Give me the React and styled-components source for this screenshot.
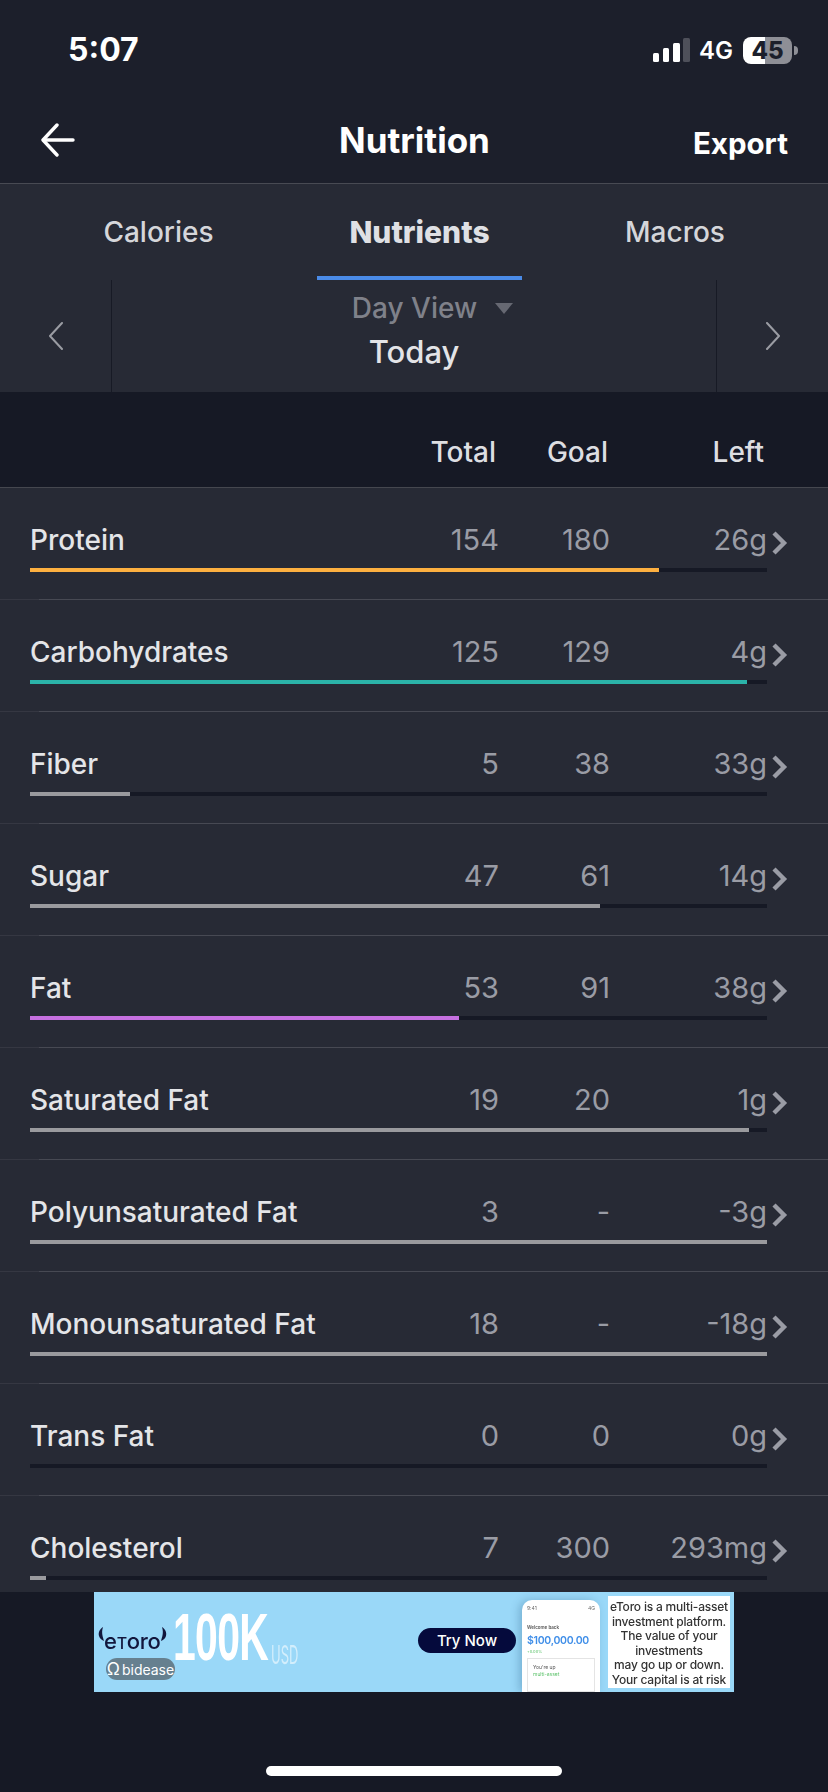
import React from "react";
import styled, { createGlobalStyle } from "styled-components";

const GlobalStyle = createGlobalStyle`
  html, body {
    margin: 0;
    padding: 0;
    background: #161925;
  }
  * {
    box-sizing: border-box;
  }
`;

const Page = styled.div`
  width: 828px;
  height: 1792px;
  display: flex;
  flex-direction: column;
  overflow: hidden;
  background: #161925;
  font-family: Inter, "Liberation Sans", sans-serif;
`;

const StatusBar = styled.div`
  height: 98px;
  flex: none;
  background: #1c1f2b;
  display: flex;
  justify-content: space-between;
  align-items: flex-start;
  padding: 30px 30px 0 68px;
`;

const Time = styled.div`
  font-size: 32px;
  line-height: 40px;
  font-weight: 700;
  color: #fff;
`;

const StatusRight = styled.div`
  display: flex;
  align-items: center;
  height: 40px;
`;

const NetLabel = styled.span`
  font-size: 24px;
  font-weight: 600;
  color: #fff;
  margin: 0 10px 0 9px;
`;

const Battery = styled.div`
  width: 49px;
  height: 27px;
  border-radius: 8px;
  background: linear-gradient(to right, #fff 45%, #8e8f96 45%);
  color: #1c1f2b;
  font-size: 24px;
  font-weight: 800;
  line-height: 27px;
  text-align: center;
`;

const BatteryTip = styled.div`
  width: 4px;
  height: 9px;
  margin-left: 2px;
  border-radius: 0 4px 4px 0;
  background: #8e8f96;
`;

const NavBar = styled.div`
  height: 86px;
  flex: none;
  background: #1c1f2b;
  border-bottom: 1px solid #484a53;
  display: grid;
  grid-template-columns: 1fr auto 1fr;
  align-items: center;
  padding: 0 40px 2px 41px;
`;

const NavTitle = styled.div`
  font-size: 35px;
  font-weight: 700;
  color: #fff;
`;

const ExportBtn = styled.div`
  justify-self: end;
  font-size: 29.5px;
  font-weight: 700;
  color: #fff;
  margin-top: 6px;
`;

const Tabs = styled.div`
  height: 96px;
  flex: none;
  background: #272a35;
  display: grid;
  grid-template-columns: 317px 205px 1fr;
`;

const Tab = styled.div`
  display: flex;
  align-items: center;
  justify-content: center;
  padding-top: 3px;
  font-size: ${(p) => (p.$active ? "30px" : "28px")};
  font-weight: ${(p) => (p.$active ? 800 : 500)};
  color: ${(p) => (p.$active ? "#dfe0e4" : "#d5d6da")};
  border-bottom: 4px solid ${(p) => (p.$active ? "#4a8be8" : "transparent")};
`;

const DaySelector = styled.div`
  height: 112px;
  flex: none;
  background: #272a35;
  display: grid;
  grid-template-columns: 112px 1fr 112px;
`;

const DayArrow = styled.div`
  display: flex;
  align-items: center;
  justify-content: center;
  border-right: ${(p) => (p.$side === "left" ? "1px solid #171a25" : "none")};
  border-left: ${(p) => (p.$side === "right" ? "1px solid #171a25" : "none")};
`;

const DayCenter = styled.div`
  display: flex;
  flex-direction: column;
  align-items: center;
  padding-top: 11px;
`;

const DayMode = styled.div`
  display: flex;
  align-items: center;
  font-size: 28px;
  line-height: 34px;
  font-weight: 500;
  color: #7f818a;
`;

const Caret = styled.span`
  width: 0;
  height: 0;
  margin: 0 -37px 0 18px;
  border-left: 9.5px solid transparent;
  border-right: 9.5px solid transparent;
  border-top: 11px solid #666872;
`;

const DayName = styled.div`
  margin-top: 9px;
  font-size: 31px;
  line-height: 36px;
  font-weight: 500;
  color: #e3e4e7;
`;

const TableHead = styled.div`
  height: 96px;
  flex: none;
  background: #161925;
  border-bottom: 1px solid #45474f;
  display: grid;
  grid-template-columns: 1fr 100px 112px 156px;
  align-items: center;
  padding: 24px 64px 0 30px;
`;

const HeadCell = styled.div`
  text-align: right;
  font-size: 28px;
  font-weight: 500;
  color: #dddee2;
`;

const RowList = styled.div`
  flex: 1;
  min-height: 0;
  overflow: hidden;
  background: #272a35;
`;

const Row = styled.div`
  height: 112px;
  padding: 34px 40px 0 30px;
  border-bottom: 1px solid #45474f;
  border-image: linear-gradient(to right, #353742 40px, #474953 40px) 1;
`;

const RowTop = styled.div`
  display: grid;
  grid-template-columns: 1fr 101px 111px 157px 21px;
  align-items: center;
  height: 34px;
`;

const Name = styled.div`
  font-size: 28px;
  font-weight: 500;
  color: #e4e5e8;
  white-space: nowrap;
`;

const Num = styled.div`
  text-align: right;
  font-size: 29px;
  font-weight: 400;
  color: #9a9ca5;
`;

const RowChevron = styled.svg`
  justify-self: end;
  margin-top: 7px;
`;

const Track = styled.div`
  height: 4px;
  margin: 12px 21px 0 0;
  background: #161925;
`;

const Fill = styled.div`
  height: 100%;
  background: ${(p) => p.$color};
`;

const Footer = styled.div`
  height: 200px;
  flex: none;
  background: #161925;
  display: flex;
  flex-direction: column;
  align-items: center;
`;

const AdBanner = styled.div`
  position: relative;
  width: 640px;
  height: 100px;
  flex: none;
  background: #9ad8f8;
  display: flex;
  overflow: hidden;
`;

const LogoBox = styled.div`
  width: 79px;
  padding: 36px 0 0 4px;
  flex: none;
  display: flex;
  align-items: flex-start;
`;

const LogoText = styled.div`
  font-size: 22px;
  line-height: 26px;
  font-weight: 500;
  color: #12163c;
  letter-spacing: -0.3px;
  filter: blur(0.4px);
`;

const SmallT = styled.span`
  font-size: 16px;
`;

const Horn = styled.svg`
  flex: none;
  margin-top: -1px;
  filter: blur(0.3px);
`;

const BigAmount = styled.div`
  font-family: "Liberation Sans", sans-serif;
  font-size: 67px;
  line-height: 100px;
  font-weight: 700;
  color: #fff;
  width: 92px;
  margin-top: -5px;
  transform: scaleX(0.61);
  transform-origin: left center;
  white-space: nowrap;
  letter-spacing: -1px;
  filter: blur(0.5px);
`;

const AmountUnit = styled.div`
  font-size: 26px;
  font-weight: 400;
  color: #d3eefc;
  width: 24px;
  margin: 47px 0 0 6px;
  transform: scaleX(0.5);
  transform-origin: left center;
  white-space: nowrap;
  filter: blur(0.5px);
`;

const TryNow = styled.div`
  width: 98px;
  height: 25px;
  margin: 36px 0 0 auto;
  border-radius: 13px;
  background: #050a3c;
  color: #fff;
  font-size: 15px;
  line-height: 25px;
  font-weight: 500;
  text-align: center;
  flex: none;
`;

const BideaseBadge = styled.div`
  position: absolute;
  left: 12px;
  top: 66px;
  width: 69px;
  height: 22px;
  border-radius: 11px;
  background: #66808f;
  color: #fff;
  font-size: 14px;
  line-height: 22px;
  font-weight: 400;
  text-align: center;
  white-space: nowrap;
`;

const BadgeMark = styled.span`
  font-size: 17px;
  margin-right: 2px;
`;

const PhoneMock = styled.div`
  width: 78px;
  height: 92px;
  margin: 8px 0 0 6px;
  padding: 4px 5px 0;
  flex: none;
  border-radius: 10px 10px 0 0;
  background: #fff;
  box-shadow: -3px 0 8px rgba(40, 90, 130, 0.3);
  display: flex;
  flex-direction: column;
  filter: blur(0.4px);
`;

const PhoneTop = styled.div`
  display: flex;
  justify-content: space-between;
  font-size: 5px;
  line-height: 8px;
  color: #666;
`;

const PhoneSmall = styled.div`
  margin-top: 13px;
  font-size: 4.5px;
  line-height: 6px;
  font-weight: 600;
  color: #555;
`;

const PhoneMoney = styled.div`
  margin-top: 3px;
  font-size: 10.5px;
  line-height: 13px;
  font-weight: 600;
  color: #3f8ee8;
  letter-spacing: -0.3px;
  white-space: nowrap;
`;

const PhoneGain = styled.div`
  margin-top: 2px;
  font-size: 4px;
  line-height: 6px;
  color: #5cc26a;
`;

const PhoneCard = styled.div`
  flex: 1;
  margin-top: 3px;
  padding: 5px 5px 0;
  border: 1px solid #e4e4e4;
  font-size: 5px;
  line-height: 7px;
  color: #555;
`;

const PhoneCardAccent = styled.div`
  color: #5cc26a;
`;

const Disclaimer = styled.div`
  width: 122px;
  height: 92px;
  margin: 4px 4px 0 8px;
  padding: 4px 0 0;
  flex: none;
  background: #fff;
  color: #333;
  font-size: 12px;
  line-height: 14.5px;
  font-weight: 500;
  text-align: center;
  white-space: nowrap;
  letter-spacing: -0.2px;
  filter: blur(0.6px);
`;

const HomeBar = styled.div`
  width: 296px;
  height: 10px;
  margin-top: 74px;
  flex: none;
  border-radius: 5px;
  background: #fff;
`;

const rows = [
  { name: "Protein", total: "154", goal: "180", left: "26g", pct: 85.4, color: "#fdb040" },
  { name: "Carbohydrates", total: "125", goal: "129", left: "4g", pct: 97.3, color: "#2bb3a9" },
  { name: "Fiber", total: "5", goal: "38", left: "33g", pct: 13.6, color: "#9a9a9e" },
  { name: "Sugar", total: "47", goal: "61", left: "14g", pct: 77.4, color: "#9a9a9e" },
  { name: "Fat", total: "53", goal: "91", left: "38g", pct: 58.2, color: "#c570e0" },
  { name: "Saturated Fat", total: "19", goal: "20", left: "1g", pct: 97.5, color: "#9a9a9e" },
  { name: "Polyunsaturated Fat", total: "3", goal: "-", left: "-3g", pct: 100, color: "#9a9a9e" },
  { name: "Monounsaturated Fat", total: "18", goal: "-", left: "-18g", pct: 100, color: "#9a9a9e" },
  { name: "Trans Fat", total: "0", goal: "0", left: "0g", pct: 0, color: "#9a9a9e" },
  { name: "Cholesterol", total: "7", goal: "300", left: "293mg", pct: 2.2, color: "#9a9a9e" },
];

const SignalIcon = () => (
  <svg width="37" height="24" viewBox="0 0 37 24">
    <rect x="0" y="15" width="6" height="9" rx="1.5" fill="#fff" />
    <rect x="10" y="10" width="6" height="14" rx="1.5" fill="#fff" />
    <rect x="20" y="5" width="7" height="19" rx="1.5" fill="#fff" />
    <rect x="30" y="0" width="7" height="24" rx="1.5" fill="#4e505a" />
  </svg>
);

const BackArrow = () => (
  <svg width="34" height="34" viewBox="0 0 34 34" fill="none" stroke="#fff" strokeWidth="3.4" strokeLinecap="round" strokeLinejoin="round">
    <path d="M32 17H3" />
    <path d="M16 2L2 17l14 15" />
  </svg>
);

const ThinChevron = ({ flip }) => (
  <svg width="16" height="28" viewBox="0 0 16 28" fill="none" stroke="#9a9ca3" strokeWidth="2" strokeLinecap="round" strokeLinejoin="round">
    <path d={flip ? "M2 1l12 13L2 27" : "M14 1L2 14l12 13"} />
  </svg>
);

const BoldChevron = () => (
  <RowChevron width="17" height="24" viewBox="0 0 17 24" fill="none" stroke="#9a9ca5" strokeWidth="4.4" strokeLinejoin="miter">
    <path d="M3 2l10 10L3 22" />
  </RowChevron>
);

const LogoHorn = ({ flip }) => (
  <Horn width="6" height="14" viewBox="0 0 6 14" fill="#12163c">
    <path d={flip ? "M1 0c3 2 5 5 4 9-1 3-3 4-5 5 1-4 3-8 1-14z" : "M5 0C2 2 0 5 1 9c1 3 3 4 5 5C5 10 3 6 5 0z"} />
  </Horn>
);

export default function App() {
  return (
    <Page>
      <GlobalStyle />
      <StatusBar>
        <Time>5:07</Time>
        <StatusRight>
          <SignalIcon />
          <NetLabel>4G</NetLabel>
          <Battery>45</Battery>
          <BatteryTip />
        </StatusRight>
      </StatusBar>

      <NavBar>
        <BackArrow />
        <NavTitle>Nutrition</NavTitle>
        <ExportBtn>Export</ExportBtn>
      </NavBar>

      <Tabs>
        <Tab>Calories</Tab>
        <Tab $active>Nutrients</Tab>
        <Tab>Macros</Tab>
      </Tabs>

      <DaySelector>
        <DayArrow $side="left">
          <ThinChevron />
        </DayArrow>
        <DayCenter>
          <DayMode>
            Day View
            <Caret />
          </DayMode>
          <DayName>Today</DayName>
        </DayCenter>
        <DayArrow $side="right">
          <ThinChevron flip />
        </DayArrow>
      </DaySelector>

      <TableHead>
        <span />
        <HeadCell>Total</HeadCell>
        <HeadCell>Goal</HeadCell>
        <HeadCell>Left</HeadCell>
      </TableHead>

      <RowList>
        {rows.map((r) => (
          <Row key={r.name}>
            <RowTop>
              <Name>{r.name}</Name>
              <Num>{r.total}</Num>
              <Num>{r.goal}</Num>
              <Num>{r.left}</Num>
              <BoldChevron />
            </RowTop>
            <Track>
              <Fill $color={r.color} style={{ width: `${r.pct}%` }} />
            </Track>
          </Row>
        ))}
      </RowList>

      <Footer>
        <AdBanner>
          <LogoBox>
            <LogoHorn />
            <LogoText>
              e<SmallT>T</SmallT>oro
            </LogoText>
            <LogoHorn flip />
          </LogoBox>
          <BigAmount>100K</BigAmount>
          <AmountUnit>USD</AmountUnit>
          <TryNow>Try Now</TryNow>
          <PhoneMock>
            <PhoneTop>
              <span>9:41</span>
              <span>4G</span>
            </PhoneTop>
            <PhoneSmall>Welcome back</PhoneSmall>
            <PhoneMoney>$100,000.00</PhoneMoney>
            <PhoneGain>+0.00%</PhoneGain>
            <PhoneCard>
              You're up
              <PhoneCardAccent>multi-asset</PhoneCardAccent>
            </PhoneCard>
          </PhoneMock>
          <Disclaimer>
            eToro is a multi-asset
            <br />
            investment platform.
            <br />
            The value of your
            <br />
            investments
            <br />
            may go up or down.
            <br />
            Your capital is at risk
          </Disclaimer>
          <BideaseBadge>
            <BadgeMark>Ω</BadgeMark>bidease
          </BideaseBadge>
        </AdBanner>
        <HomeBar />
      </Footer>
    </Page>
  );
}
